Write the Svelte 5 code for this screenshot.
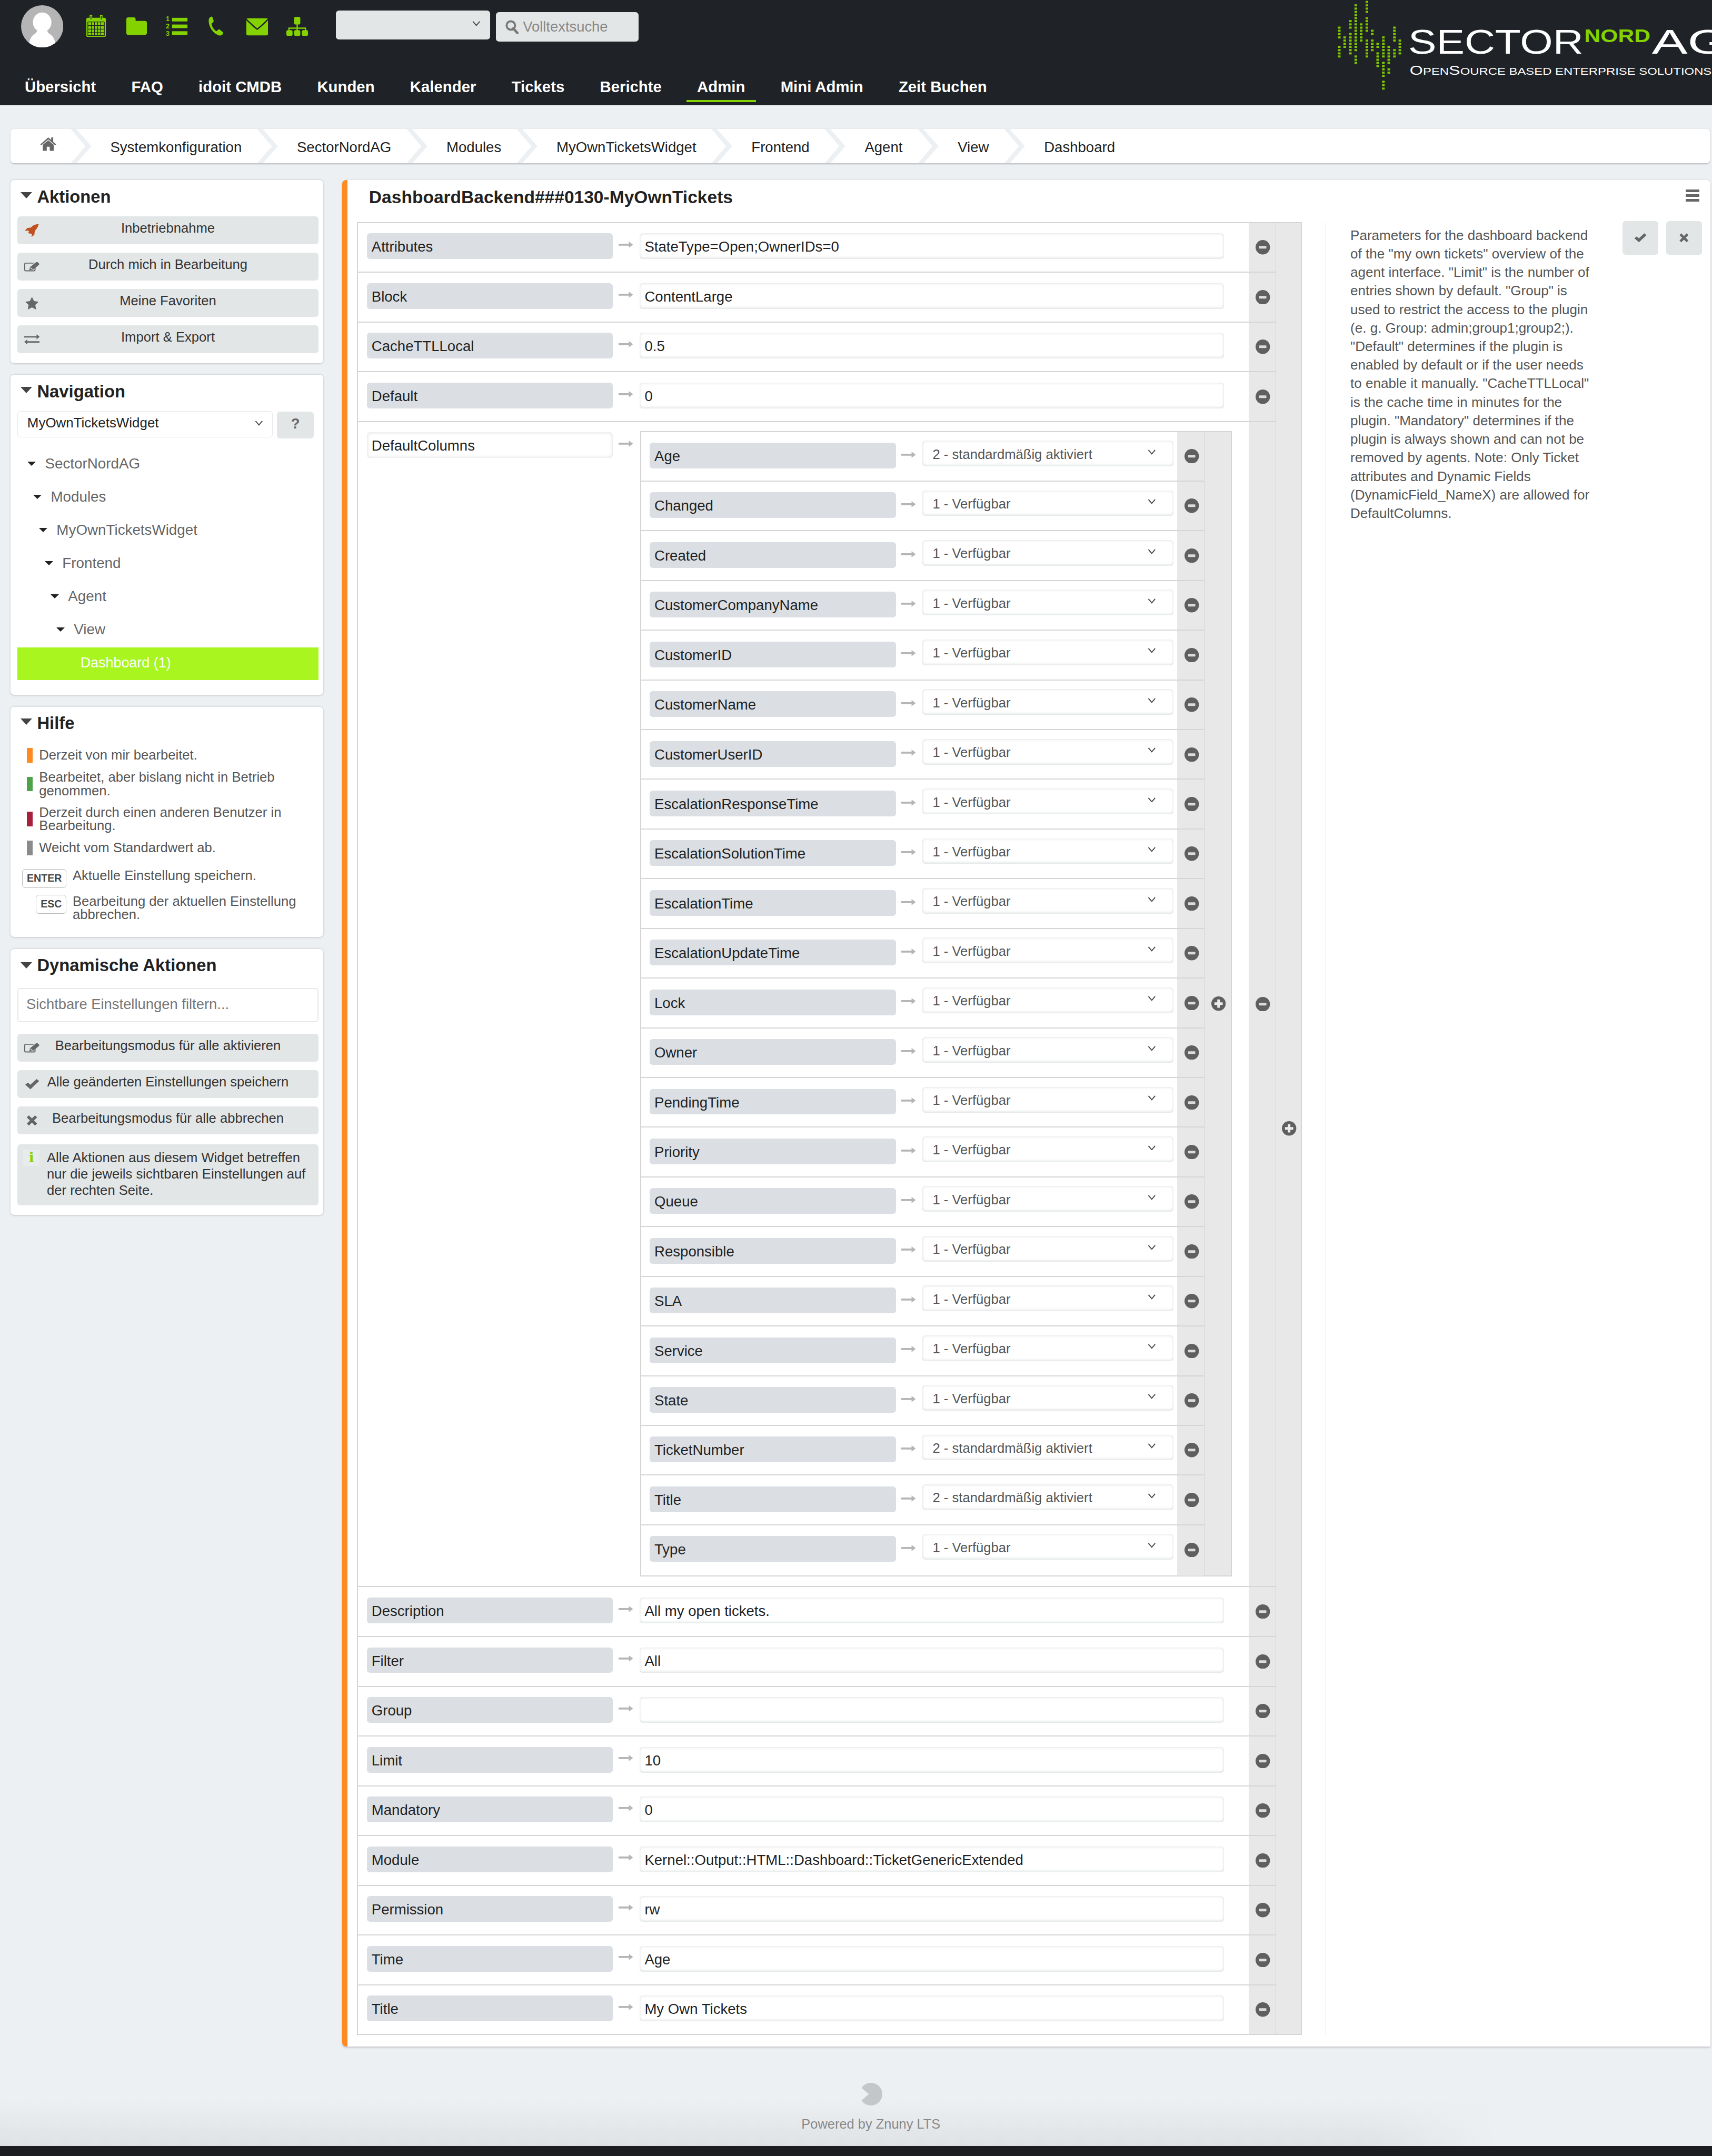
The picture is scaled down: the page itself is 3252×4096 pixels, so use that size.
<script>
  const navItems = ["Übersicht","FAQ","idoit CMDB","Kunden","Kalender","Tickets","Berichte","Admin","Mini Admin","Zeit Buchen"];
  const crumbs = ["Systemkonfiguration","SectorNordAG","Modules","MyOwnTicketsWidget","Frontend","Agent","View","Dashboard"];
  const tree = ["SectorNordAG","Modules","MyOwnTicketsWidget","Frontend","Agent","View"];
  const top = [["Attributes","StateType=Open;OwnerIDs=0"],["Block","ContentLarge"],["CacheTTLLocal","0.5"],["Default","0"]];
  const bottom = [["Description","All my open tickets."],["Filter","All"],["Group",""],["Limit","10"],["Mandatory","0"],["Module","Kernel::Output::HTML::Dashboard::TicketGenericExtended"],["Permission","rw"],["Time","Age"],["Title","My Own Tickets"]];
  const on = "2 - standardmäßig aktiviert", off = "1 - Verfügbar";
  const columns = [["Age",on],["Changed",off],["Created",off],["CustomerCompanyName",off],["CustomerID",off],["CustomerName",off],["CustomerUserID",off],["EscalationResponseTime",off],["EscalationSolutionTime",off],["EscalationTime",off],["EscalationUpdateTime",off],["Lock",off],["Owner",off],["PendingTime",off],["Priority",off],["Queue",off],["Responsible",off],["SLA",off],["Service",off],["State",off],["TicketNumber",on],["Title",on],["Type",off]];
  const help = [
    ["#ff8a1f",["Derzeit von mir bearbeitet."]],
    ["#4ea24a",["Bearbeitet, aber bislang nicht in Betrieb","genommen."]],
    ["#a9203c",["Derzeit durch einen anderen Benutzer in","Bearbeitung."]],
    ["#8a8a8a",["Weicht vom Standardwert ab."]]
  ];
  const desc = ['Parameters for the dashboard backend','of the "my own tickets" overview of the','agent interface. "Limit" is the number of','entries shown by default. "Group" is','used to restrict the access to the plugin','(e. g. Group: admin;group1;group2;).','"Default" determines if the plugin is','enabled by default or if the user needs','to enable it manually. "CacheTTLLocal"','is the cache time in minutes for the','plugin. "Mandatory" determines if the','plugin is always shown and can not be','removed by agents. Note: Only Ticket','attributes and Dynamic Fields','(DynamicField_NameX) are allowed for','DefaultColumns.'];
  const dots = [
    [188,[155,173,192,212,267,286,305,323]],
    [208,[212,230,249,267]],
    [229,[117,136,155,192,212,230,249,267,286,305]],
    [249,[25,44,63,82,100,117,136,155,173,192,212,230,249,267,286,323,342,360]],
    [269,[136,155,173,192,212,230]],
    [290,[5,25,44,63,100,117,136,155,173,230,249,267,286,305,323]],
    [310,[173,192,230,249,267,286]],
    [330,[249,267,305,323,342,360,379]],
    [351,[212,230,249,267,286,305,323,360,379,398,417,436,470,490,510]],
    [371,[267,286,305,323,342,360,398,417]],
    [392,[155,173,192,212,230,286,305,323]],
    [412,[230,249,267,286,305]]
  ];
</script>

{#snippet arrow()}
  <svg class="arrow" viewBox="0 0 28 14"><path d="M0 5h20V1l8 6-8 6V9H0z" fill="#b5b5b5"/></svg>
{/snippet}
{#snippet minus()}
  <svg class="round" viewBox="0 0 28 28"><circle cx="14" cy="14" r="14" fill="#5f5f5f"/><rect x="7" y="11.5" width="14" height="5" rx="1" fill="#ddd"/></svg>
{/snippet}
{#snippet plus()}
  <svg class="round" viewBox="0 0 28 28"><circle cx="14" cy="14" r="14" fill="#5f5f5f"/><path d="M11.5 6h5v5.500H22v5h-5.500V22h-5v-5.500H6v-5h5.500z" fill="#eee"/></svg>
{/snippet}
{#snippet chevron()}
  <svg class="chev" viewBox="0 0 16 10"><path d="M1.500 1 8 8.500 14.500 1" fill="none" stroke="#444" stroke-width="2"/></svg>
{/snippet}
{#snippet edit()}
  <svg class="bi" viewBox="0 0 30 20"><path d="M21 9v7a2 2 0 0 1-2 2H3a2 2 0 0 1-2-2V5a2 2 0 0 1 2-2h15" fill="none" stroke="#666" stroke-width="2"/><path d="M11 11 23 1h3l3 3v2L17 16l-7 1z" fill="#666"/><path d="M12 12l4 3" stroke="#e3e6e6" stroke-width="1.500"/></svg>
{/snippet}
{#snippet check(cls)}
  <svg class={cls} viewBox="0 0 30 20"><path d="M2 11l5-4 5 4L24 0l5 4-17 16z" fill="#666"/></svg>
{/snippet}
{#snippet cross(cls)}
  <svg class={cls} viewBox="0 0 30 20"><path d="M5 4l4-4 6 6 6-6 4 4-6 6 6 6-4 4-6-6-6 6-4-4 6-6z" fill="#666"/></svg>
{/snippet}
{#snippet widgethead(title)}
  <div class="whead"><i class="wtri"></i><h2>{title}</h2></div>
{/snippet}

<div class="page">
  <header>
    <div class="top">
      <svg class="avatar" viewBox="0 0 82 82">
        <defs><clipPath id="ac"><circle cx="41" cy="41" r="41"/></clipPath></defs>
        <circle cx="41" cy="41" r="41" fill="#b5b5b5"/>
        <g clip-path="url(#ac)" fill="#fff">
          <ellipse cx="41" cy="33" rx="18" ry="19"/>
          <path d="M32 48h18l3 6c8 4 14 12 14 28H15c0-16 6-24 14-28z"/>
        </g>
      </svg>
      <div class="hicons">
        <span class="slot"><svg viewBox="0 0 44 44"><rect x="3" y="6" width="38" height="37" rx="3" fill="#84d200"/><path d="M12 1v9M32 1v9" stroke="#84d200" stroke-width="5" stroke-linecap="round"/><path d="M12 2v7M32 2v7" stroke="#1f2327" stroke-width="1.500"/><path d="M6 14h32M6 21h32M6 28h32M6 35h32M6 40.500h32M6 14v27M13 14v27M19 14v27M25 14v27M31 14v27M38 14v27" stroke="#1f2327" stroke-width="1.300"/></svg></span>
        <span class="slot"><svg viewBox="0 0 44 44"><path d="M2 9a4 4 0 0 1 4-4h10a4 4 0 0 1 4 4v3h18a4 4 0 0 1 4 4v19a4 4 0 0 1-4 4H6a4 4 0 0 1-4-4z" fill="#84d200"/></svg></span>
        <span class="slot listic"><svg viewBox="0 0 44 44"><rect x="13" y="6" width="30" height="7" fill="#84d200"/><rect x="13" y="19" width="30" height="7" fill="#84d200"/><rect x="13" y="32" width="30" height="7" fill="#84d200"/><text x="1" y="12" class="num">1</text><text x="1" y="27" class="num">2</text><text x="1" y="41" class="num">3</text></svg></span>
        <span class="slot"><svg viewBox="0 0 44 44"><path d="M11 4c-4 1-5 6-4 12 2 11 9 20 19 24 3 1 7 0 8-3 1-2 1-3-1-4l-5-4c-1-1-3-1-4 1l-2 2c-6-3-9-9-10-15l3-2c1-1 1-2 1-4l-2-6c-1-1-2-2-3-1z" fill="#84d200"/></svg></span>
        <span class="slot"><svg viewBox="0 0 44 44"><rect x="1" y="7" width="42" height="33" rx="3" fill="#84d200"/><path d="M1 9c8 8 14 14 21 19 7-5 13-11 21-19" fill="none" stroke="#1f2327" stroke-width="2.500"/></svg></span>
        <span class="slot"><svg viewBox="0 0 44 44"><rect x="16" y="4" width="12" height="15" rx="3" fill="#84d200"/><path d="M22 17v8M6 32v-6h32v6M22 25v7" fill="none" stroke="#84d200" stroke-width="2.500"/><rect x="1" y="30" width="12" height="11" rx="3" fill="#84d200"/><rect x="16" y="30" width="12" height="11" rx="3" fill="#84d200"/><rect x="31" y="30" width="12" height="11" rx="3" fill="#84d200"/></svg></span>
      </div>
      <div class="hselect">{@render chevron()}</div>
      <div class="search">
        <svg viewBox="0 0 28 28"><circle cx="12" cy="11" r="8.500" fill="none" stroke="#777" stroke-width="4"/><path d="M17 17l8 9" stroke="#777" stroke-width="5" stroke-linecap="round"/></svg>
        <span>Volltextsuche</span>
      </div>
    </div>
    <nav>
      {#each navItems as n}<span class="navitem" class:active={n === "Admin"}>{n}</span>{/each}
    </nav>
    <svg class="logo" viewBox="0 0 733 204">
      {#each dots as [x, ys]}
        {#each ys as y}<rect x={x / 1.905 - 92} y={y / 3} width="5" height="4" fill="#7fc800"/>{/each}
      {/each}
      <text x="143" y="104" class="lg" textLength="340" lengthAdjust="spacingAndGlyphs">SECTOR</text>
      <text x="485" y="82" class="lgn" textLength="128" lengthAdjust="spacingAndGlyphs">NORD</text>
      <text x="616" y="104" class="lg" textLength="150" lengthAdjust="spacingAndGlyphs">AG</text>
      <text x="146" y="145" class="tag" textLength="586" lengthAdjust="spacingAndGlyphs"><tspan class="big">O</tspan>PEN<tspan class="big">S</tspan>OURCE BASED ENTERPRISE SOLUTIONS</text>
    </svg>
  </header>

  <div class="crumbbar">
    <svg class="home" viewBox="0 0 32 28"><path d="M16 1 0 15l2 2 14-12 14 12 2-2-6-5V1h-4v5z" fill="#666"/><path d="M5 16 16 7l11 9v12h-8v-8h-6v8H5z" fill="#666"/></svg>
    <svg class="sep first" viewBox="0 0 43 68"><path d="M0 0h11l30 34-30 34H0l29-34z" fill="#edf0f3"/></svg>
    {#each crumbs as c, i}
      <span class="crumb">{c}</span>
      {#if i < crumbs.length - 1}<svg class="sep" viewBox="0 0 43 68"><path d="M0 0h11l30 34-30 34H0l29-34z" fill="#edf0f3"/></svg>{/if}
    {/each}
  </div>

  <div class="content">
    <aside>
      <section class="widget">
        {@render widgethead("Aktionen")}
        <div class="btns">
          <div class="btn">
            <svg class="bi" viewBox="0 0 30 28"><path d="M29 1c-7 0-12 2-16 7l-8 1-5 6 7-1 2 3-2 1 4 4 1-2 3 2-1 6 6-5 1-8c4-4 7-9 8-14z" fill="#c0501f"/></svg>
            <span>Inbetriebnahme</span>
          </div>
          <div class="btn">{@render edit()}<span>Durch mich in Bearbeitung</span></div>
          <div class="btn">
            <svg class="bi" viewBox="0 0 30 28"><path d="M15 1l4.300 9 9.700 1.300-7 6.700 1.700 9.700L15 23l-8.700 4.700L8 18l-7-6.700L10.700 10z" fill="#666"/></svg>
            <span>Meine Favoriten</span>
          </div>
          <div class="btn">
            <svg class="bi" viewBox="0 0 30 24"><path d="M0 6h24V2l6 5-6 5V8.500H0zM30 15.500H6V12l-6 5 6 5v-3.500h24z" fill="#666"/></svg>
            <span>Import &amp; Export</span>
          </div>
        </div>
      </section>

      <section class="widget navw">
        {@render widgethead("Navigation")}
        <div class="navsel">
          <div class="combo"><span>MyOwnTicketsWidget</span>{@render chevron()}</div>
          <div class="qbtn">?</div>
        </div>
        <div class="tree">
          {#each tree as t, i}
            <div class="node" style="padding-left:{19 + i * 11.2}px"><i class="ttri"></i><span>{t}</span></div>
          {/each}
          <div class="sel">Dashboard (1)</div>
        </div>
      </section>

      <section class="widget helpw">
        {@render widgethead("Hilfe")}
        <div class="legend">
          {#each help as [color, lines]}
            <div class="lg-item">
              <i class="swatch" style="background:{color}"></i>
              <div>{#each lines as l}<div>{l}</div>{/each}</div>
            </div>
          {/each}
        </div>
        <div class="keys">
          <div class="keyrow"><span class="kcol"><kbd>ENTER</kbd></span><div class="ktext"><div>Aktuelle Einstellung speichern.</div></div></div>
          <div class="keyrow second"><span class="kcol"><kbd>ESC</kbd></span><div class="ktext"><div>Bearbeitung der aktuellen Einstellung</div><div>abbrechen.</div></div></div>
        </div>
      </section>

      <section class="widget dynw">
        {@render widgethead("Dynamische Aktionen")}
        <div class="filter">Sichtbare Einstellungen filtern...</div>
        <div class="btns">
          <div class="btn">{@render edit()}<span>Bearbeitungsmodus für alle aktivieren</span></div>
          <div class="btn">{@render check("bi")}<span>Alle geänderten Einstellungen speichern</span></div>
          <div class="btn">{@render cross("bi")}<span>Bearbeitungsmodus für alle abbrechen</span></div>
        </div>
        <div class="info">
          <span class="ibox">i</span>
          <div><div>Alle Aktionen aus diesem Widget betreffen</div><div>nur die jeweils sichtbaren Einstellungen auf</div><div>der rechten Seite.</div></div>
        </div>
      </section>
    </aside>

    <main>
      <div class="mhead">
        <h1>DashboardBackend###0130-MyOwnTickets</h1>
        <div class="burger"><i></i><i></i><i></i></div>
      </div>
      <div class="mbody">
        <div class="table">
          <div class="rows">
            {#each top as [k, v]}
              <div class="row">
                <div class="rmain">
                  <div class="key">{k}</div>{@render arrow()}<div class="val">{v}</div>
                </div>
                <div class="rem">{@render minus()}</div>
              </div>
            {/each}
            <div class="row tall">
              <div class="rmain">
                <div class="key plain">DefaultColumns</div>{@render arrow()}
                <div class="ntable">
                  <div class="nrows">
                    {#each columns as [k, v]}
                      <div class="nrow">
                        <div class="nmain">
                          <div class="nkey">{k}</div>{@render arrow()}
                          <div class="nsel"><span>{v}</span>{@render chevron()}</div>
                        </div>
                        <div class="rem">{@render minus()}</div>
                      </div>
                    {/each}
                  </div>
                  <div class="add">{@render plus()}</div>
                </div>
              </div>
              <div class="rem">{@render minus()}</div>
            </div>
            {#each bottom as [k, v]}
              <div class="row">
                <div class="rmain">
                  <div class="key">{k}</div>{@render arrow()}<div class="val">{v}</div>
                </div>
                <div class="rem">{@render minus()}</div>
              </div>
            {/each}
          </div>
          <div class="add">{@render plus()}</div>
        </div>
        <div class="descwrap">
          <div class="desc">{#each desc as d}<div>{d}</div>{/each}</div>
          <div class="acts">
            <div class="act">{@render check("ai")}</div>
            <div class="act">{@render cross("ai")}</div>
          </div>
        </div>
      </div>
    </main>
  </div>

  <footer>
    <div class="fcenter">
      <svg viewBox="0 0 44 44"><path d="M18 22 3.500 10A22 22 0 1 1 3.500 34Z" fill="#c3c7ca"/></svg>
      <div class="powered">Powered by Znuny LTS</div>
    </div>
    <div class="bar"></div>
  </footer>
</div>

<style>
  :global(html), :global(body) { margin: 0; background: #edf0f3; overflow: hidden; }
  * { box-sizing: border-box; }
  .page {
    zoom: 0.9786;
    width: 3323px;
    height: 4186px;
    display: flex;
    flex-direction: column;
    background: #edf0f3;
    font-family: "Liberation Sans", Arial, sans-serif;
    font-size: 26.200px;
    color: #222;
    overflow: hidden;
  }
  header { position: relative; height: 204px; background: #1f2327; flex: none; }
  .top { display: flex; align-items: flex-start; height: 140px; padding-left: 41px; }
  .avatar { width: 82px; height: 82px; margin-top: 10px; flex: none; }
  .hicons { display: flex; margin-left: 25px; margin-top: 29px; }
  .slot { width: 78px; display: flex; justify-content: center; }
  .slot svg { width: 44px; height: 44px; }
  .listic svg { overflow: visible; }
  .num { font: bold 13px "Liberation Sans", sans-serif; fill: #84d200; }
  .hselect { width: 299px; height: 57px; margin: 20px 0 0 36px; background: #e3e6e6; border-radius: 6px; display: flex; align-items: center; justify-content: flex-end; padding: 0 18px 6px 0; }
  .search { width: 277px; height: 57px; margin: 24px 0 0 12px; background: #e3e6e6; border-radius: 6px; display: flex; align-items: center; padding-left: 17px; color: #888; font-size: 28px; gap: 8px; }
  .search svg { width: 27px; height: 27px; }
  nav { display: flex; gap: 68.700px; padding-left: 48px; height: 58px; align-items: center; }
  .navitem { position: relative; color: #fff; font-weight: bold; font-size: 30px; white-space: nowrap; }
  .active::after { content: ""; position: absolute; left: -21px; right: -21px; top: 43px; height: 4px; background: #84d200; }
  .logo { position: absolute; right: 0; top: 0; width: 733px; height: 204px; overflow: hidden; }
  .lg { font: 66px "Liberation Sans", sans-serif; fill: #fff; }
  .lgn { font: bold 36px "Liberation Sans", sans-serif; fill: #84d200; }
  .tag { font: 18.500px "Liberation Sans", sans-serif; fill: #fff; }
  .big { font-size: 25px; }

  .crumbbar { flex: none; display: flex; align-items: center; width: 3299px; height: 67px; margin: 46px 0 0 20px; background: #fff; border-radius: 7px; box-shadow: 0 2px 3px rgba(0,0,0,.2); font-size: 28.200px; padding-left: 58px; }
  .home { width: 32px; height: 27px; flex: none; margin-top: -8px; }
  .sep { width: 43px; height: 67px; flex: none; margin: 0 35px 0 29px; }
  .sep.first { margin-left: 27px; margin-right: 34px; }
  .crumb { white-space: nowrap; padding-top: 6px; }

  .content { flex: none; display: flex; align-items: flex-start; gap: 37px; margin: 33px 0 0 20px; }
  aside { width: 607px; flex: none; display: flex; flex-direction: column; gap: 23px; }
  .widget { background: #fff; border-radius: 7px; box-shadow: 0 1px 4px rgba(0,0,0,.2); padding: 0 9px 19px 14px; }
  .whead { height: 70px; display: flex; align-items: center; position: relative; padding-bottom: 6px; padding-left: 24px; }
  .wtri { position: absolute; left: 6px; top: 23px; border-style: solid; border-width: 13px 12px 0; border-color: #444 transparent transparent; }
  h2 { margin: 0 0 0 14px; font-size: 33.500px; font-weight: bold; color: #222; }
  .btns { display: flex; flex-direction: column; gap: 16px; }
  .btn { height: 54.500px; background: #e3e6e6; border-radius: 6px; display: grid; grid-template-columns: 43px 1fr 43px; align-items: center; padding-left: 13px; }
  .btn span { grid-column: 2; text-align: center; padding-bottom: 9px; white-space: nowrap; margin-left: -13px; color: #333; }
  .bi { width: 30px; height: 26px; }
  .navsel { display: flex; align-items: flex-start; height: 53px; }
  .combo { width: 495px; height: 51px; border: 2px solid #e8e8e8; border-radius: 6px; display: flex; align-items: center; justify-content: space-between; padding: 0 17px 4px 18px; font-size: 26.500px; }
  .qbtn { width: 71px; height: 52px; margin: 1px 0 0 9px; background: #e3e6e6; border-radius: 6px; text-align: center; font-weight: bold; font-size: 28px; line-height: 48px; color: #666; }
  .chev { width: 16px; height: 10px; flex: none; }
  .tree { margin-top: 17px; }
  .node { height: 64.400px; display: flex; align-items: center; font-size: 28.400px; color: #666; }
  .ttri { width: 0; height: 0; border-style: solid; border-width: 9px 8.500px 0; border-color: #222 transparent transparent; margin-right: 18px; }
  .sel { height: 63px; margin-top: 3px; background: #a8f520; color: #fff; font-size: 27.500px; line-height: 60px; padding-left: 122px; }
  .navw { padding-bottom: 29px; }
  .helpw { padding-bottom: 30px; }
  .legend { display: flex; flex-direction: column; gap: 16px; margin-top: 10px; line-height: 26px; color: #555; }
  .lg-item { display: flex; align-items: center; gap: 13px; padding-left: 18px; }
  .swatch { width: 11px; height: 28px; flex: none; }
  .keys { margin-top: 27px; color: #555; line-height: 26px; }
  .keyrow { display: flex; align-items: flex-start; gap: 12px; }
  .keyrow.second { margin-top: 13px; }
  .kcol { width: 95px; display: flex; justify-content: flex-end; flex: none; }
  kbd { font: bold 20px "Liberation Sans", sans-serif; color: #444; border: 2px solid #bbb; border-radius: 6px; height: 37px; line-height: 33px; padding: 0 8px; background: #fff; }
  .dynw { padding-bottom: 18px; }
  .dynw .whead { height: 76px; padding-bottom: 12px; }
  .dynw .wtri { top: 26px; }
  .filter { height: 66px; border: 3px solid #e8e8e8; border-radius: 6px; font-size: 28px; color: #777; line-height: 60px; padding-left: 15px; margin-bottom: 23px; }
  .info { display: flex; align-items: flex-start; margin-top: 19px; background: #e3e6e6; border-radius: 6px; height: 119px; padding: 10px 14px 0 11px; line-height: 32px; color: #333; }
  .ibox { flex: none; width: 32px; height: 32px; background: #e9ecec; margin-right: 14px; text-align: center; font: bold 27px/30px "DejaVu Serif", serif; color: #84d200; }

  main { width: 2656px; flex: none; background: #fff; border-left: 11px solid #ff8a1f; border-radius: 8px 8px 0 8px; box-shadow: 0 2px 4px rgba(0,0,0,.2); padding-bottom: 22px; }
  .mhead { height: 81px; display: flex; align-items: flex-start; justify-content: space-between; padding: 0 21px 0 42px; }
  h1 { margin: 14px 0 0; font-size: 34.300px; font-weight: bold; white-space: nowrap; }
  .burger { display: flex; flex-direction: column; gap: 4px; margin-top: 18px; width: 27px; }
  .burger i { display: block; height: 5px; background: #666; border-radius: 1px; }
  .mbody { display: flex; align-items: stretch; padding-left: 19px; }
  .table { width: 1834px; flex: none; display: flex; border: 3px solid #d5d5d5; border-bottom: 0; }
  .rows { flex: 1; min-width: 0; }
  .row { height: 96.600px; display: flex; border-bottom: 3px solid #d5d5d5; }
  .row.tall { height: 2262px; }
  .rmain { flex: 1; min-width: 0; display: flex; align-items: flex-start; padding: 20px 48px 0 17px; }
  .tall .rmain { padding-right: 0; }
  .key { width: 477px; height: 50px; flex: none; background: #dbdfe3; border-radius: 6px; line-height: 53px; padding-left: 9px; font-size: 28.200px; }
  .key.plain { background: #fff; box-shadow: inset 0 0 6px 1px #dfe3e3; }
  .arrow { width: 28px; height: 14px; flex: none; margin: 15px 13px 0 11px; }
  .tall > .rmain > .arrow { margin-right: 14px; }
  .val { flex: 1; height: 50px; background: #fff; border-radius: 6px; box-shadow: inset 0 -3px 5px -1px #dfe3e3, inset 0 3px 5px -2px #e4e7e7, inset 2px 0 3px -1px #eef0f0, inset -2px 0 3px -1px #eef0f0; line-height: 53px; padding-left: 10px; font-size: 28.200px; }
  .rem { width: 52px; flex: none; background: #e8e8e8; display: flex; align-items: center; justify-content: center; padding-left: 3px; }
  .nrow .rem { padding-left: 5px; }
  .round { width: 28px; height: 28px; }
  .add { width: 49px; flex: none; background: #e8e8e8; border-left: 2px solid #d5d5d5; border-bottom: 3px solid #d5d5d5; display: flex; align-items: center; justify-content: center; padding-left: 3px; }
  .ntable { width: 1149px; flex: none; height: 2224px; margin-top: -3px; display: flex; border: 3px solid #d5d5d5; }
  .nrows { flex: 1; min-width: 0; }
  .nrow { height: 96.500px; display: flex; border-bottom: 3px solid #d5d5d5; }
  .nrow:last-child { border-bottom: 0; height: 96px; }
  .nmain { flex: 1; min-width: 0; display: flex; align-items: flex-start; padding-left: 17px; }
  .nkey { width: 478px; height: 50px; flex: none; margin-top: 21px; background: #dbdfe3; border-radius: 6px; line-height: 53px; padding-left: 9px; font-size: 28.200px; }
  .nmain .arrow { margin: 37px 13px 0 10px; }
  .nsel { width: 488px; height: 50px; flex: none; margin-top: 17px; background: #fff; border-radius: 6px; box-shadow: inset 0 -3px 5px -1px #dfe3e3, inset 0 3px 5px -2px #e4e7e7, inset 2px 0 3px -1px #eef0f0, inset -2px 0 3px -1px #eef0f0; display: flex; align-items: center; justify-content: space-between; padding: 3px 35px 0 20px; color: #555; font-size: 26.200px; }
  .nsel .chev { margin-bottom: 9px; }
  .ntable .add { border-bottom: 0; width: 52px; }
  .descwrap { flex: none; margin-left: 46px; border-left: 2px solid #e8e8e8; padding-left: 47px; display: flex; align-items: flex-start; }
  .desc { width: 524px; flex: none; padding-top: 8px; line-height: 36px; color: #555; white-space: nowrap; font-size: 26.600px; }
  .acts { display: flex; gap: 15px; margin-top: -2px; margin-left: 4px; }
  .act { width: 70px; height: 66px; background: #e3e6e6; border-radius: 6px; display: flex; align-items: center; justify-content: center; }
  .ai { width: 26px; height: 20px; }

  footer { position: relative; flex: 1; display: flex; flex-direction: column; justify-content: flex-end; }
  footer::before { content: ""; position: absolute; left: 0; bottom: 20px; width: 2900px; height: 90px; background: linear-gradient(to bottom, transparent, #dfe2e4); -webkit-mask-image: linear-gradient(to right, #000 92%, transparent); mask-image: linear-gradient(to right, #000 92%, transparent); }
  .fcenter { position: relative; margin-left: 58px; display: flex; flex-direction: column; align-items: center; }
  .fcenter svg { width: 44px; height: 44px; }
  .powered { margin-top: 22px; height: 57px; color: #888; font-size: 26px; }
  .bar { position: relative; height: 20px; background: #1b1d20; }
</style>
